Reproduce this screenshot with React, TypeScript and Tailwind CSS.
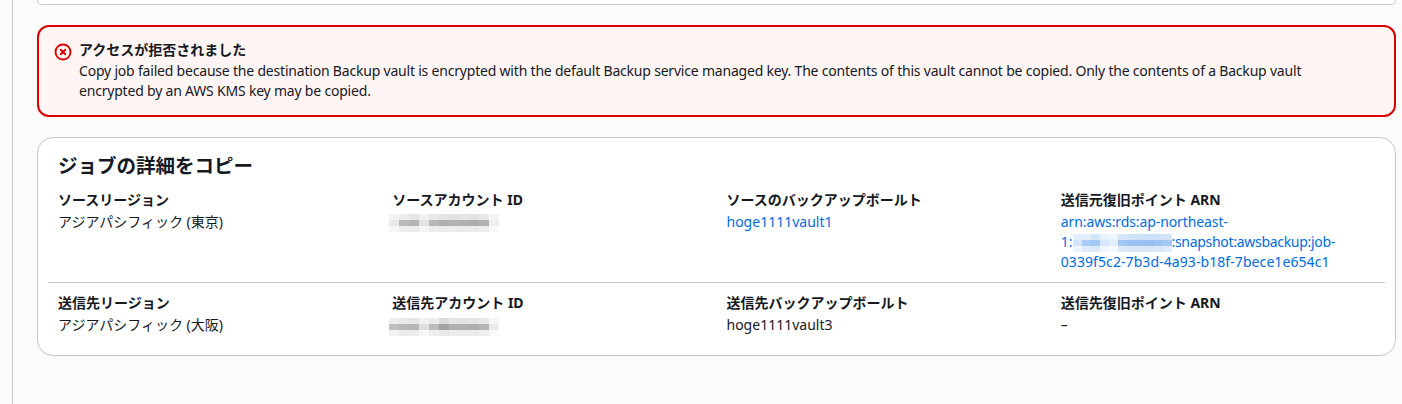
import React from 'react';
import { XCircle } from 'lucide-react';

const FONT = "font-['Noto_Sans','Noto_Sans_CJK_JP',sans-serif]";

type Mosaic = { top: string[]; mid: string[]; bottom: string[] };

const sourceAccount: Mosaic = {
  top: ['#f3f3f4', '#ececed', '#e6e6e7', '#f0f0f1', '#e8e8e9', '#e4e4e5', '#e2e2e3', '#e6e6e7', '#e4e4e5', '#e8e8e9', '#f4f4f5'],
  mid: ['#e9e9ea', '#b9b9bb', '#b4b4b6', '#e4e4e5', '#b7b7b9', '#afafb1', '#b3b3b5', '#b0b0b2', '#adadaf', '#b2b2b4', '#eeeeef'],
  bottom: ['#f6f6f7', '#eeeeef', '#ececed', '#f5f5f6', '#ededee', '#ebebec', '#ececed', '#ebebec', '#eaeaeb', '#ededee', '#fafafa'],
};

const destAccount: Mosaic = {
  top: ['#eeeeef', '#e8e8e9', '#e6e6e7', '#f1f1f2', '#ebebec', '#dcdcdd', '#e4e4e5', '#e4e4e5', '#e5e5e6', '#e8e8e9', '#f6f6f7'],
  mid: ['#bfbfc1', '#b8b8ba', '#b6b6b8', '#dfdfe0', '#bcbcbe', '#a2a2a4', '#b1b1b3', '#b1b1b3', '#aeaeb0', '#b5b5b7', '#eaeaeb'],
  bottom: ['#f2f2f3', '#ededee', '#ececed', '#f7f7f8', '#eeeeef', '#e8e8e9', '#ecedee', '#ebebec', '#ebebec', '#eeeeef', '#fbfbfb'],
};

const arnAccount: Mosaic = {
  top: ['#e3eefc', '#e3eefc', '#d5e5fa', '#e8f1fd', '#eef5fe', '#d6e6fa', '#d0e2f9', '#cfe1f9', '#cde0f9', '#d0e2f9', '#d3e4fa'],
  mid: ['#d4e5fa', '#a9cbf5', '#a3c7f4', '#d8e7fb', '#e3eefc', '#a3c7f4', '#9bc2f3', '#9ac1f3', '#98c0f3', '#9dc3f3', '#a6c9f4'],
  bottom: ['#edf4fe', '#dfebfc', '#dce9fb', '#f1f6fe', '#f5f9fe', '#dde9fb', '#d9e7fb', '#d9e7fb', '#d8e6fb', '#dae8fb', '#e0ecfc'],
};

// pixelated block hiding an account number
function Redacted({ data, cell }: { data: Mosaic; cell: string }) {
  return (
    <span className="inline-flex flex-col align-middle">
      {[data.top, data.mid, data.bottom].map((row, i) => (
        <span key={i} className="flex h-[6px]">
          {row.map((c, j) => (
            <span key={j} className={cell} style={{ backgroundColor: c }} />
          ))}
        </span>
      ))}
    </span>
  );
}

function Field({ label, children }: { label: string; children: React.ReactNode }) {
  return (
    <div className="pl-[10px] pr-3">
      <div className="text-[14px] leading-[24px] font-bold text-[#16191f]">{label}</div>
      <div className="text-[14px] leading-[20px] text-[#16191f]">{children}</div>
    </div>
  );
}

export default function App() {
  return (
    <div className={`${FONT} h-[404px] w-[1402px] overflow-hidden bg-[#fbfbfb] pl-[12px]`}>
      <div className="h-full border-l border-[#c6c6cd] pl-[24px] pr-[6px]">
        <div className="h-[5px] rounded-b-2xl border-b border-x border-[#c6c6cd] bg-white" />

        <div className="mt-[20px] flex h-[92px] gap-[7px] rounded-xl border-2 border-[#db0000] bg-[#fff5f5] pl-[15px] pr-[20px] pt-[13px]">
          <XCircle className="mt-[3px] h-[18px] w-[18px] shrink-0 text-[#db0000]" strokeWidth={2.5} />
          <div className="text-[14px] leading-[20px] text-[#16191f]">
            <div className="font-semibold">アクセスが拒否されました</div>
            <div className="mt-[1px] tracking-[-0.2px]">
              Copy job failed because the destination Backup vault is encrypted with the default Backup service managed key. The contents of this vault cannot be copied. Only the contents of a Backup vault
              <br />
              encrypted by an AWS KMS key may be copied.
            </div>
          </div>
        </div>

        <div className="mt-[20px] h-[219px] rounded-2xl border border-[#c6c6cd] bg-white px-[10px] pt-[14px]">
          <h2 className="pl-[10px] text-[19.5px] leading-[28px] font-bold text-[#16191f]">ジョブの詳細をコピー</h2>

          <div className="mt-[8px] grid grid-cols-4 border-b border-[#c6c6cd] pb-[10px]">
            <Field label="ソースリージョン">アジアパシフィック (東京)</Field>
            <Field label="ソースアカウント ID">
              <span className="-ml-[3px] block h-[20px]">
                <Redacted data={sourceAccount} cell="w-[10px]" />
              </span>
            </Field>
            <Field label="ソースのバックアップボールト">
              <a className="text-[#006ce0]">hoge1111vault1</a>
            </Field>
            <Field label="送信元復旧ポイント ARN">
              <a className="block text-[#006ce0]">
                <span className="tracking-[-0.1px]">arn:aws:rds:ap-northeast-</span>
                <br />
                1:
                <Redacted data={arnAccount} cell="w-[9px]" />
                <span className="tracking-[-0.3px]">:snapshot:awsbackup:job-</span>
                <br />
                <span className="tracking-[0.08px]">0339f5c2-7b3d-4a93-b18f-7bece1e654c1</span>
              </a>
            </Field>
          </div>

          <div className="mt-[8px] grid grid-cols-4">
            <Field label="送信先リージョン">アジアパシフィック (大阪)</Field>
            <Field label="送信先アカウント ID">
              <span className="-ml-[3px] block h-[20px]">
                <Redacted data={destAccount} cell="w-[10px]" />
              </span>
            </Field>
            <Field label="送信先バックアップボールト">hoge1111vault3</Field>
            <Field label="送信先復旧ポイント ARN">–</Field>
          </div>
        </div>
      </div>
    </div>
  );
}
